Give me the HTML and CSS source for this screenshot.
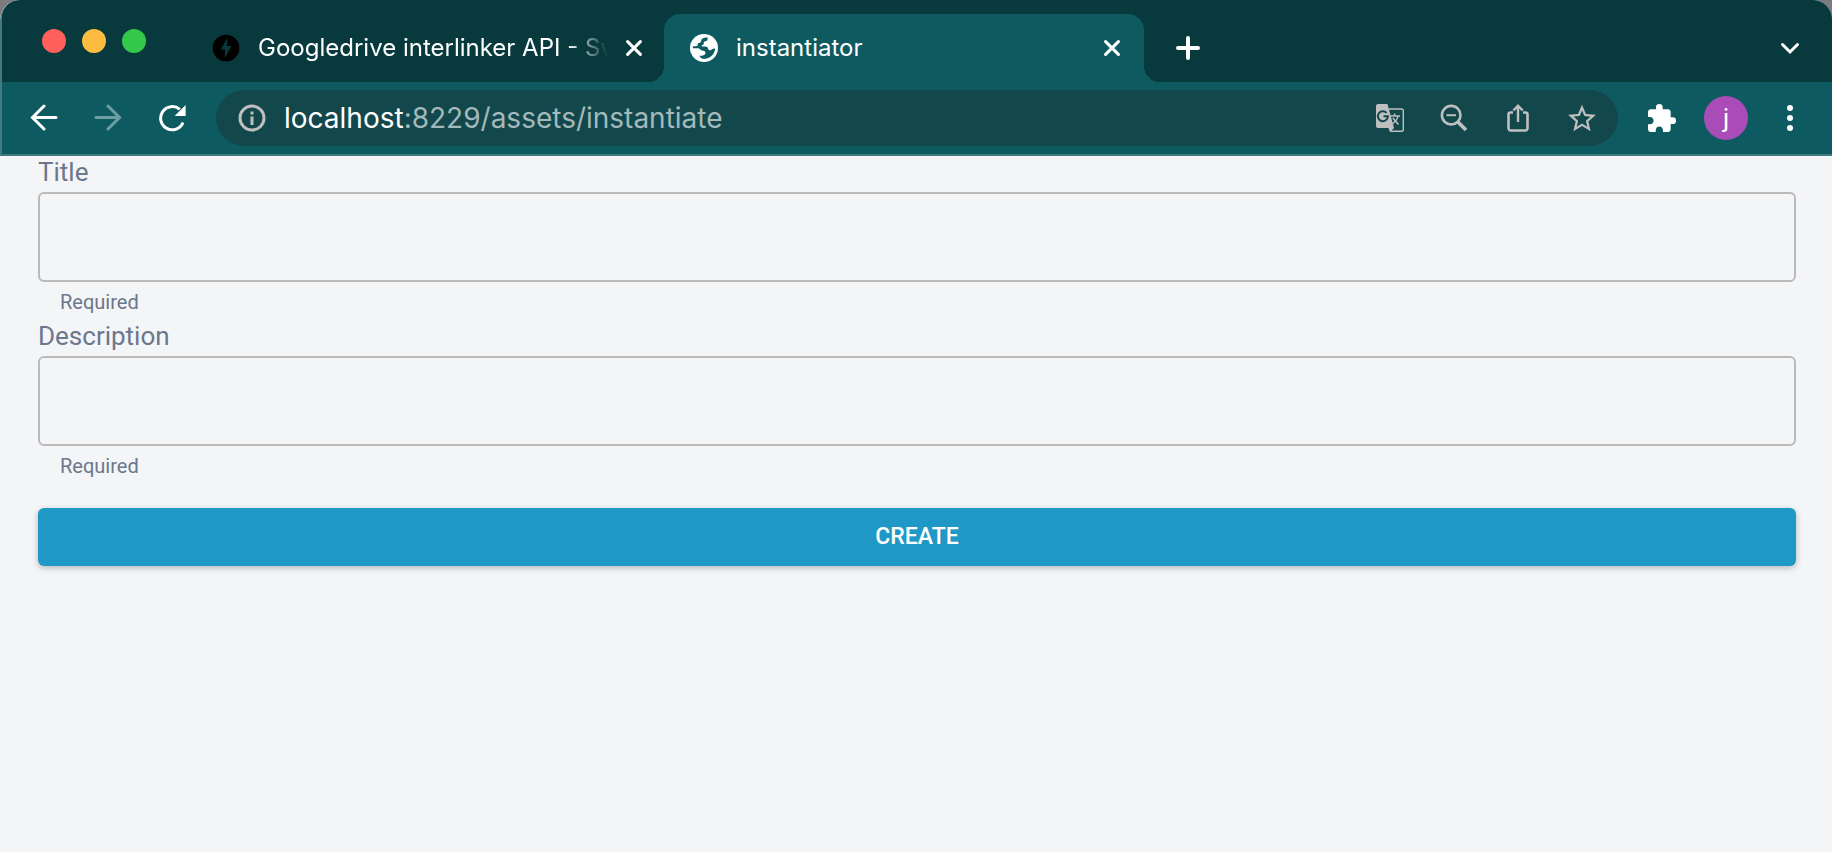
FILE: index.html
```html
<!DOCTYPE html>
<html lang="en">
<head>
<meta charset="utf-8">
<title>instantiator</title>
<link rel="stylesheet" href="styles.css">
</head>
<body>
<div class="window">
  <header class="chrome">
    <div class="tab-strip">
      <div class="lights">
        <button class="light light-close" aria-label="Close window"></button>
        <button class="light light-min" aria-label="Minimise window"></button>
        <button class="light light-max" aria-label="Zoom window"></button>
      </div>
      <div class="tab">
        <svg class="favicon" viewBox="0 0 28 28" aria-hidden="true"><circle cx="14" cy="14" r="13.3" fill="#000"/><path d="M15.8 3.6 8.6 15.6h4.6L12.6 24l6.8-12h-4.6z" fill="#07393d"/></svg>
        <span class="tab-title tab-title-fade">Googledrive interlinker API - Swagger UI</span>
        <button class="tab-close" aria-label="Close tab"><svg viewBox="0 0 16 16"><path d="M1.6 1.6l12.8 12.8M14.4 1.6 1.6 14.4"/></svg></button>
      </div>
      <div class="tab tab-active">
        <svg class="favicon" viewBox="0 0 28 28" aria-hidden="true"><circle cx="14" cy="14" r="14" fill="#fff"/><path d="M17.500 3.400C18 5.600 17.400 6.800 15.600 7.200C14 7.500 13.600 8.200 13.700 9.400C13.700 10.500 13 11 11.800 11V12.500H15C17 12.500 18 13.300 18.200 15C18.400 16 19 16.300 20 16.300C21.200 16.300 22 15.500 22.800 14.800L25.200 14.500C24.800 19.500 21 24 15.500 24.800C12.500 25.200 10 24 9.500 21.500C12 22.200 15.500 21.500 15.500 19C15.500 17 13.500 16.800 12 16.500C10 16 10 14.200 8 14.200H2.800V12.600L7.600 12V10.600C7.600 9.300 8.400 8.800 9.600 8.700C10.700 8.600 11.200 8 11.200 6.800C11.200 4.800 13 3.400 17.500 3.400Z" fill="#0d5b61"/></svg>
        <span class="tab-title">instantiator</span>
        <button class="tab-close" aria-label="Close tab"><svg viewBox="0 0 16 16"><path d="M1.600 1.600l12.800 12.800M14.400 1.600 1.600 14.400"/></svg></button>
      </div>
      <button class="strip-button" aria-label="New tab"><svg class="icon-24" viewBox="0 0 24 24"><path d="M12 2v20M2 12h20" stroke="#fff" stroke-width="4" stroke-linecap="round"/></svg></button>
      <button class="strip-button strip-end" aria-label="Search tabs"><svg class="icon-24" viewBox="0 0 24 24"><path d="m4.500 8.500 7.500 7.500 7.500-7.500" fill="none" stroke="#fff" stroke-width="3" stroke-linecap="round"/></svg></button>
    </div>
    <div class="toolbar">
      <nav class="group">
        <button class="tool" aria-label="Back"><svg class="icon" viewBox="0 0 28 28"><path d="M26 13.500H3M14 2 2.500 13.500 14 25" fill="none" stroke="#fff" stroke-width="3" stroke-linecap="round"/></svg></button>
        <button class="tool" aria-label="Forward"><svg class="icon" viewBox="0 0 28 28"><path d="M2 13.500h23M14 2l11.500 11.500L14 25" fill="none" stroke="#6d9fa2" stroke-width="3" stroke-linecap="round"/></svg></button>
        <button class="tool" aria-label="Reload"><svg class="icon" viewBox="0 0 28 28"><path d="M25 18.500A11.600 11.600 0 1 1 21.800 5.400" fill="none" stroke="#fff" stroke-width="3"/><path d="M27.600 1v11H16.600z" fill="#fff"/></svg></button>
      </nav>
      <div class="omnibox">
        <svg class="icon" viewBox="0 0 28 28" aria-hidden="true"><circle cx="14" cy="14" r="12" fill="none" stroke="#bfbfbf" stroke-width="3"/><path d="M12.500 12.500h3V21h-3zM12.500 7.500h3v3h-3z" fill="#bfbfbf"/></svg>
        <div class="address"><span class="host">localhost</span>:8229/assets/instantiate</div>
        <div class="group">
          <button class="tool" aria-label="Translate this page"><svg class="icon" viewBox="0 0 28 28"><path d="M13 5h12.500A1.800 1.800 0 0 1 27.300 6.800v18.700a1.800 1.800 0 0 1-1.800 1.800H15l-1.500-4" fill="none" stroke="#bfbfbf" stroke-width="1.400"/><path d="M2 0h9.500l6.500 24-4 4-1.500-4H2a2 2 0 0 1-2-2V2a2 2 0 0 1 2-2z" fill="#bfbfbf"/><path d="M10.600 8.800A5 5 0 1 0 11.900 12.300H7.500" fill="none" stroke="#12484c" stroke-width="2"/><path d="M14.500 12h9.500M18.600 9.500V12M22 12c-.5 3-3 6-6 8M16.800 14l5.700 6.500" fill="none" stroke="#bfbfbf" stroke-width="1.500"/></svg></button>
          <button class="tool" aria-label="Zoom out"><svg class="icon" viewBox="0 0 28 28"><circle cx="11.200" cy="11.200" r="9.300" fill="none" stroke="#bfbfbf" stroke-width="2.600"/><path d="M6.500 11.200H16" stroke="#bfbfbf" stroke-width="2"/><path d="m17.700 17.700 8.300 8.300" stroke="#bfbfbf" stroke-width="3.600"/></svg></button>
          <button class="tool" aria-label="Share"><svg class="icon" viewBox="0 0 28 28"><path d="M9 8.500H6.500A2 2 0 0 0 4.500 10.500v14a2.500 2.500 0 0 0 2 2h15a2.500 2.500 0 0 0 2-2v-14a2 2 0 0 0-2-2H19" fill="none" stroke="#bfbfbf" stroke-width="2.600"/><path d="M14 18V2.500M9.300 6.500 14 1.800l4.700 4.700" fill="none" stroke="#bfbfbf" stroke-width="2.400"/></svg></button>
          <button class="tool" aria-label="Bookmark this page"><svg class="icon" viewBox="2 1.500 20 20"><path fill="#bfbfbf" d="m22 9.240-7.190-.62L12 2 9.190 8.630 2 9.240l5.460 4.730L5.820 21 12 17.270 18.180 21l-1.630-7.030L22 9.240zM12 15.400l-3.760 2.270 1-4.280-3.320-2.880 4.380-.38L12 6.100l1.710 4.040 4.380.38-3.320 2.880 1 4.280L12 15.400z"/></svg></button>
        </div>
      </div>
      <div class="group">
        <button class="tool" aria-label="Extensions"><svg class="icon" viewBox="2 1 21 21"><path fill="#fff" d="M20.500 11H19V7c0-1.100-.9-2-2-2h-4V3.500a2.500 2.500 0 0 0-5 0V5H4c-1.100 0-1.990.9-1.990 2v3.800H3.500c1.490 0 2.700 1.210 2.700 2.700s-1.210 2.700-2.700 2.700H2V20c0 1.100.9 2 2 2h3.800v-1.500c0-1.490 1.210-2.700 2.700-2.700s2.700 1.210 2.700 2.700V22H17c1.100 0 2-.9 2-2v-4h1.500a2.500 2.500 0 0 0 0-5z"/></svg></button>
        <button class="tool" aria-label="Profile"><span class="avatar">j</span></button>
        <button class="tool" aria-label="Menu"><svg class="icon" viewBox="0 0 28 28"><g fill="#fff"><circle cx="14" cy="4" r="3"/><circle cx="14" cy="14" r="3"/><circle cx="14" cy="24" r="3"/></g></svg></button>
      </div>
    </div>
  </header>
  <main>
    <form class="form">
      <label class="label" for="title">Title</label>
      <input class="input" id="title" type="text" aria-describedby="title-help">
      <p class="help" id="title-help">Required</p>
      <label class="label" for="description">Description</label>
      <input class="input" id="description" type="text" aria-describedby="description-help">
      <p class="help" id="description-help">Required</p>
      <button class="create" type="button">CREATE</button>
    </form>
  </main>
</div>
</body>
</html>
```
FILE: styles.css
```css
* { box-sizing: border-box; }

body {
  margin: 0;
  background: #7b7b7d;
  font-family: Roboto, "Liberation Sans", sans-serif;
}

button {
  border: 0;
  padding: 0;
  background: none;
  color: inherit;
  font: inherit;
}

svg { display: block; flex: none; }

.window {
  min-height: 100vh;
  overflow: hidden;
  border-radius: 20px 20px 0 0;
  background: #f4f5f7;
}

.chrome {
  border-left: 2px solid #3f7b80;
  border-bottom: 2px solid #3f7b80;
  border-top-left-radius: 20px;
  background: #0d5b61;
  color: #fff;
}

.tab-strip {
  display: flex;
  height: 82px;
  padding: 14px 14px 0 40px;
  background: #07393d;
  border-top-left-radius: 18px;
}

.lights { display: flex; gap: 16px; padding-top: 15px; }
.light { width: 24px; height: 24px; border-radius: 50%; }
.light-close { background: #ff605c; }
.light-min { background: #fdbc40; }
.light-max { background: #34c84a; }

.tab {
  position: relative;
  display: flex;
  align-items: center;
  gap: 18px;
  flex: 0 1 480px;
  min-width: 0;
  padding: 0 24px 0 26px;
  font-family: Inter, "Liberation Sans", sans-serif;
  font-size: 24px;
  line-height: 32px;
}
.lights + .tab { flex-basis: 478px; margin-left: 40px; padding-right: 22px; }

.tab-active { border-radius: 16px 16px 0 0; background: #0d5b61; }
.tab-active::before,
.tab-active::after {
  content: "";
  position: absolute;
  bottom: 0;
  width: 16px;
  height: 16px;
}
.tab-active::before {
  right: 100%;
  background: radial-gradient(circle at 0 0, transparent 16px, #0d5b61 16px);
}
.tab-active::after {
  left: 100%;
  background: radial-gradient(circle at 100% 0, transparent 16px, #0d5b61 16px);
}

.favicon { width: 28px; height: 28px; }
.tab-title { flex: 1; min-width: 0; overflow: hidden; white-space: nowrap; }
.tab-title-fade {
  -webkit-mask-image: linear-gradient(to left, transparent, #000 40px);
  mask-image: linear-gradient(to left, transparent, #000 40px);
}
.tab-close svg { width: 16px; height: 16px; }
.tab-close path { stroke: #fff; stroke-width: 3; stroke-linecap: round; }

.strip-button { display: grid; place-items: center; width: 56px; margin-left: 16px; }
.strip-end { margin-left: auto; }
.icon-24 { width: 24px; height: 24px; }

.toolbar {
  display: flex;
  align-items: center;
  gap: 16px;
  padding: 8px 14px;
}
.group { display: flex; gap: 8px; }
.tool { display: grid; place-items: center; width: 56px; height: 56px; }
.icon { width: 28px; height: 28px; }

.omnibox {
  display: flex;
  align-items: center;
  flex: 1;
  min-width: 0;
  gap: 18px;
  padding: 0 8px 0 22px;
  border-radius: 28px;
  background: #12484c;
}
.address {
  flex: 1;
  min-width: 0;
  overflow: hidden;
  white-space: nowrap;
  color: #a3b9bb;
  font-family: Inter, "Liberation Sans", sans-serif;
  font-size: 28px;
  line-height: 40px;
}
.host { color: #fff; }

.avatar {
  width: 44px;
  border-radius: 50%;
  background: #a94cb8;
  font-size: 26px;
  line-height: 44px;
  text-align: center;
}

.form {
  display: flex;
  flex-direction: column;
  padding: 0 36px 0 38px;
  color: #6b778c;
}
.label { padding-bottom: 4px; font-size: 26px; line-height: 32px; }
.input {
  height: 90px;
  padding: 0 22px;
  border: 2px solid #bababb;
  border-radius: 6px;
  background: transparent;
  font: inherit;
  font-size: 26px;
}
.help { margin: 0; padding: 6px 22px 4px; font-size: 20px; line-height: 28px; }
.create {
  margin-top: 24px;
  border-radius: 6px;
  background: #2098c6;
  box-shadow: 0 2px 6px rgba(0, 0, 0, 0.25);
  color: #fff;
  font-size: 23px;
  font-weight: 500;
  line-height: 58px;
}
```
